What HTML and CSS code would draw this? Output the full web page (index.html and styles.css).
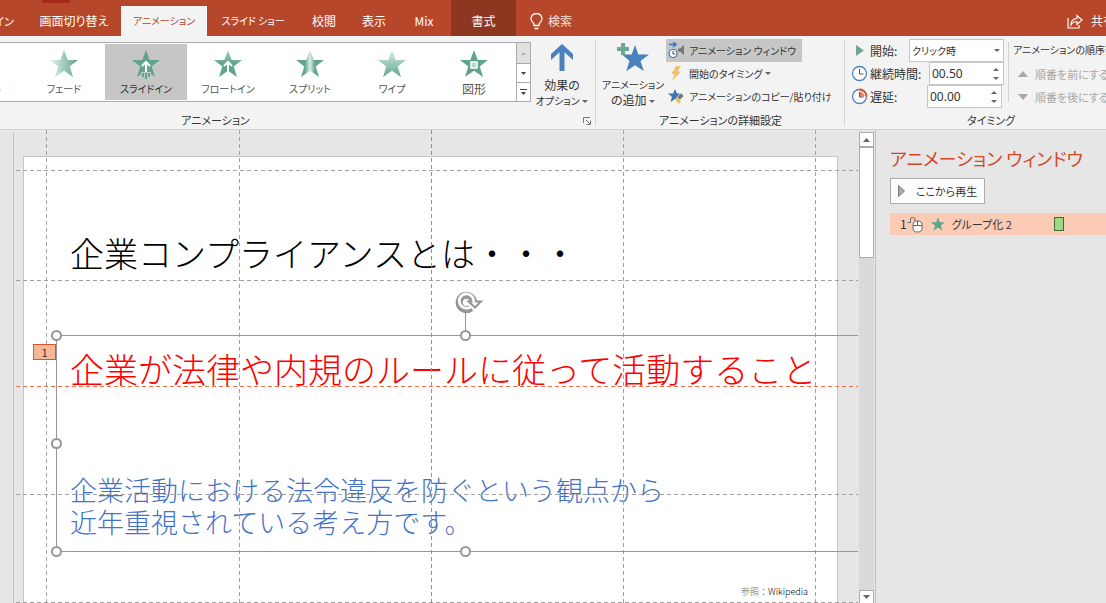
FILE: index.html
```html
<!DOCTYPE html>
<html lang="ja">
<head>
<meta charset="utf-8">
<title>アニメーション</title>
<link rel="stylesheet" href="styles.css">
</head>
<body>
<svg class="defs" aria-hidden="true">
  <defs>
    <linearGradient id="fade"><stop offset="0" stop-color="#e4f0eb"/><stop offset="1" stop-color="#5fa48c"/></linearGradient>
    <linearGradient id="float" x2="0" y2="1"><stop offset="0" stop-color="#b5d6ca"/><stop offset=".5" stop-color="#5fa48c"/></linearGradient>
    <linearGradient id="split"><stop offset=".32" stop-color="#5fa48c"/><stop offset=".5" stop-color="#dcece6"/><stop offset=".68" stop-color="#5fa48c"/></linearGradient>
    <linearGradient id="wipe" x2="0" y2="1"><stop offset="0" stop-color="#dcece6"/><stop offset="1" stop-color="#5fa48c"/></linearGradient>
    <path id="star" d="M14 0l3.700 10H28l-8.300 6.500L23 27l-9-6.300L5 27l3.300-10.500L0 10h10.300z"/>
  </defs>
</svg>

<nav class="tabs">
  <button class="tab tab-first">デザイン</button>
  <button class="tab tab-transition">画面切り替え</button>
  <button class="tab tab-active">アニメーション</button>
  <button class="tab tab-show">スライド ショー</button>
  <button class="tab tab-short">校閲</button>
  <button class="tab tab-short">表示</button>
  <button class="tab tab-short">Mix</button>
  <button class="tab tab-context">書式</button>
  <button class="tab tab-search">
    <svg width="13" height="17" viewBox="0 0 13 17" fill="none" stroke="#fff" stroke-width="1.300"><path d="M4 12.500V11C2 9 1 7.800 1 5.700a5.500 5.200 0 0 1 11 0C12 7.800 11 9 9 11v1.500zM4.500 15.500h4"/></svg>
    検索
  </button>
  <button class="tab tab-share">
    <svg width="16" height="15" viewBox="0 0 16 15" fill="none" stroke="#fff" stroke-width="1.200"><path d="M1 4v10h11v-3M4 11c0-4 2-6.500 6-6.500V1.500l5 4.500-5 4.500V7.500C7 7.500 5.500 8.500 4 11z"/></svg>
    共有
  </button>
</nav>

<header class="ribbon">
  <section class="group group-gallery">
    <div class="group-body">
      <div class="gallery">
        <button class="effect"><svg width="28" height="27"><use href="#star" fill="#5fa48c"/></svg>アピール</button>
        <button class="effect"><svg width="28" height="27"><use href="#star" fill="url(#fade)"/></svg>フェード</button>
        <button class="effect effect-on"><svg width="28" height="29"><use href="#star" fill="#5fa48c"/><path d="M9 22h10v5H9z" fill="#c6c6c6"/><path d="M10 23h2v4h-2zM13 23h2v6h-2zM16 23h2v4h-2z" fill="#5fa48c"/><path d="M14 22v-9M10 16l4-4 4 4" fill="none" stroke="#fff" stroke-width="2"/></svg>スライドイン</button>
        <button class="effect"><svg width="28" height="27"><use href="#star" fill="url(#float)"/><path d="M14 22v-9M10 16l4-4 4 4" fill="none" stroke="#fff" stroke-width="2"/></svg>フロートイン</button>
        <button class="effect"><svg width="28" height="27"><use href="#star" fill="url(#split)"/></svg>スプリット</button>
        <button class="effect"><svg width="28" height="27"><use href="#star" fill="url(#wipe)"/></svg>ワイプ</button>
        <button class="effect"><svg width="28" height="27"><use href="#star" fill="#5fa48c"/><path d="M11 12h6v6h-6z" fill="#b5d6ca" stroke="#fff" stroke-width="1.500"/></svg>図形</button>
      </div>
      <div class="gallery-nav">
        <button class="nav-off" aria-label="上へ"><svg width="5" height="3"><path d="M0 3l2.500-3L5 3z" fill="#b0b0b0"/></svg></button>
        <button aria-label="下へ"><svg width="5" height="3"><path d="M0 0h5L2.500 3z" fill="#444"/></svg></button>
        <button aria-label="その他"><svg width="7" height="7"><path d="M0 0h7v1H0zM1 3h5L3.500 6z" fill="#444"/></svg></button>
      </div>
      <button class="big big-options">
        <svg width="22" height="27" viewBox="0 0 22 27"><path d="M11 0l11 10v6L13.500 8.300V27h-5V8.300L0 16v-6z" fill="#4a81bd"/></svg>
        <span>効果の</span>
        <span><span class="kana">オプション</span> <i class="caret"></i></span>
      </button>
    </div>
    <div class="group-label">アニメーション</div>
    <button class="launcher" aria-label="詳細"><svg width="8" height="8" fill="none" stroke="#777"><path d="M.5 6V.5H7M3 3l4 4M7.500 3.500v4h-4"/></svg></button>
  </section>

  <section class="group group-advanced">
    <div class="group-body">
      <button class="big big-add">
        <svg width="32" height="29" viewBox="0 0 32 29"><path d="M18 2l3.400 9.500H32l-8.500 6.500 3.300 10L18 22.300 9.200 28.300l3.300-10.300L5 11.500h9.600z" fill="#4a81bd"/><path d="M4 0h4v4h4v4H8v4H4V8H0V4h4z" fill="#6fa592"/></svg>
        <span class="kana">アニメーション</span>
        <span>の追加 <i class="caret"></i></span>
      </button>
      <div class="commands">
        <button class="command command-on"><svg width="17" height="17" viewBox="0 0 17 17"><path d="M1 2.500h6M5 0l3 2.500L5 5" fill="none" stroke="#3b76b5" stroke-width="1.600"/><circle cx="5" cy="11.500" r="4" fill="#fff" stroke="#3b76b5" stroke-width="1.200"/><path d="M5 9v3h2" fill="none" stroke="#444"/><path d="M10 6.500h2L16 3v10l-4-3.500h-2z" fill="#777"/></svg>アニメーション ウィンドウ</button>
        <button class="command"><svg width="17" height="17" viewBox="0 0 17 17"><path d="M8 1h5L9.500 6.500H13L4 16l2.500-7H3.500z" fill="#f0bf62"/></svg>開始のタイミング <i class="caret"></i></button>
        <button class="command"><svg width="17" height="17" viewBox="0 0 17 17"><path d="M7 1l2 4.500h5L10 9l1.500 5L7 11l-4.500 3L4 9 0 5.500h5z" fill="#3b76b5"/><path d="M9 9l4-4 3 3-4 4z" fill="#777" stroke="#eee" stroke-width=".7"/><path d="M7 11l2-2 4 4-2 3z" fill="#f0bf62"/></svg>アニメーションのコピー/貼り付け</button>
      </div>
    </div>
    <div class="group-label">アニメーションの詳細設定</div>
  </section>

  <section class="group group-timing">
    <div class="group-body">
      <div class="fields">
        <div class="field field-start">
          <svg width="17" height="17"><path d="M5 3v11l8-5.500z" fill="#6fa592"/></svg>
          <label for="start">開始:</label>
          <select id="start" class="box box-start"><option>クリック時</option></select>
        </div>
        <div class="field">
          <svg width="17" height="17" fill="none"><circle cx="8.500" cy="8.500" r="7" fill="#fff" stroke="#4a81bd" stroke-width="1.300"/><path d="M8.500 4v5h4" stroke="#555"/></svg>
          <label for="duration">継続時間:</label>
          <span class="box box-spin"><input id="duration" value="00.50"><span class="spin"><i class="caret caret-up"></i><i class="caret"></i></span></span>
        </div>
        <div class="field">
          <svg width="17" height="17" fill="none"><circle cx="8.500" cy="8.500" r="7" fill="#fff" stroke="#4a81bd" stroke-width="1.300"/><path d="M8.500 1.500a7 7 0 0 1 7 7" stroke="#d35230" stroke-width="1.800"/><path d="M8.500 3.500a5 5 0 0 1 5 5h-5z" fill="#e8836a"/><path d="M8.500 4v5h4" stroke="#555"/></svg>
          <label for="delay">遅延:</label>
          <span class="box box-spin box-delay"><input id="delay" value="00.00"><span class="spin"><i class="caret caret-up"></i><i class="caret"></i></span></span>
        </div>
      </div>
      <div class="order">
        <span class="order-title">アニメーションの順序変更</span>
        <button class="order-button" disabled><svg width="10" height="6"><path d="M0 6l5-6 5 6z" fill="#a8a8a8"/></svg>順番を前にする</button>
        <button class="order-button" disabled><svg width="10" height="6"><path d="M0 0h10L5 6z" fill="#a8a8a8"/></svg>順番を後にする</button>
      </div>
    </div>
    <div class="group-label">タイミング</div>
  </section>
</header>

<div class="workspace">
  <div class="thumbs"></div>
  <main class="canvas">
    <article class="slide">
      <h1 class="slide-title">企業コンプライアンスとは・・・</h1>
      <p class="slide-lead">企業が法律や内規のルールに従って活動すること</p>
      <p class="slide-text">企業活動における法令違反を防ぐという観点から<br>近年重視されている考え方です。</p>
      <p class="slide-source"><span>参照：</span>Wikipedia</p>
    </article>
    <svg class="overlay" width="844" height="473" fill="none">
      <g stroke="#a0a0a0" stroke-dasharray="4 3">
        <path d="M32.500 0v473M225.500 0v473M609.500 0v473M801.500 0v473"/>
        <path d="M2 40.500h842M2 150.500h842M2 364.500h842M2 472.500h842"/>
      </g>
      <path d="M417.500 0v473M2 256.500h842" stroke="#f0704a" stroke-dasharray="4 3"/>
      <path d="M844 205.500H42.500v216H844M451.500 205v-24" stroke="#969696"/>
      <g stroke="#969696" stroke-width="2" fill="#fff">
        <circle cx="42.500" cy="205.500" r="4.500"/><circle cx="451.500" cy="205.500" r="4.500"/>
        <circle cx="42.500" cy="313.500" r="4.500"/>
        <circle cx="42.500" cy="421.500" r="4.500"/><circle cx="451.500" cy="421.500" r="4.500"/>
      </g>
      <path d="M457 178A7.200 7.200 0 1 1 459.500 171.500" stroke="#969696" stroke-width="7"/>
      <path d="M454.500 171.500H467l-6 6z" fill="#fff" stroke="#969696" stroke-width="2"/>
      <path d="M456.500 177A7.200 7.200 0 1 1 459.500 172.500" stroke="#fff" stroke-width="2.600"/>
    </svg>
    <span class="tag">1</span>
  </main>
  <div class="scrollbar">
    <button aria-label="上へスクロール"><svg width="7" height="4"><path d="M0 4l3.500-4L7 4z" fill="#666"/></svg></button>
    <div class="thumb"></div>
    <button class="scroll-down" aria-label="下へスクロール"><svg width="7" height="4"><path d="M0 0h7L3.500 4z" fill="#666"/></svg></button>
  </div>
  <aside class="pane">
    <h2 class="pane-title">アニメーション ウィンドウ</h2>
    <button class="play"><svg width="7" height="12"><path d="M.5.500v11l6-5.500z" fill="#aaa" stroke="#777"/></svg>ここから再生</button>
    <div class="entry">
      <span>1</span>
      <svg width="16" height="17" fill="none" stroke="#666"><path d="M.5 6.500h3V3q0-1.500 2-1.500T8 3v2"/><path d="M6 8.500q0-3.500 4.500-3.500t4.500 3.500v4q0 3.500-4.500 3.500t-4.500-3.500z" fill="#fff"/><path d="M6 9.500h9M10.500 5v4.500"/></svg>
      <svg class="entry-star" width="14" height="14" viewBox="0 0 28 27"><use href="#star" fill="#5fa48c"/></svg>
      <span class="entry-name">グループ化 2</span>
      <span class="bar"></span>
    </div>
  </aside>
</div>
</body>
</html>
```
FILE: styles.css
```css
* { box-sizing: border-box; }
body {
  margin: 0;
  height: 100vh;
  display: flex;
  flex-direction: column;
  overflow: hidden;
  background: #e6e6e6;
  color: #333;
  font: 12px/16px "Noto Sans CJK JP", sans-serif;
  font-feature-settings: "palt";
}
button, input, select { font: inherit; font-feature-settings: inherit; color: inherit; }
button { border: 0; padding: 0; background: none; white-space: nowrap; }
h1, h2, p { margin: 0; font-weight: 400; }
svg { flex: none; display: block; }
.defs { position: absolute; width: 0; height: 0; }
.kana { font-size: 10px; }

.tabs {
  flex: none;
  display: flex;
  height: 36px;
  padding-top: 6px;
  background: linear-gradient(#a52a1a, #a52a1a) 42px 0 / 28px 3px no-repeat #b7472a;
  color: #fff;
}
.tab { flex: none; }
.tab-first { width: 27px; padding-right: 13px; display: flex; justify-content: flex-end; align-items: center; font-size: 11px; }
.tab-transition { width: 94px; }
.tab-active { width: 86px; background: #f3f3f3; color: #b7472a; font-size: 10px; }
.tab-show { width: 92px; font-size: 10px; }
.tab-short { width: 50px; }
.tab-context { width: 65px; margin: -6px 0 0 2px; padding-top: 6px; background: #8e3720; }
.tab-search { display: flex; align-items: center; gap: 5px; margin-left: 14px; color: #f5e0da; }
.tab-share { display: flex; align-items: center; gap: 8px; margin: 0 -9px 0 auto; }

.ribbon {
  flex: none;
  display: flex;
  height: 94px;
  background: #f3f3f3;
  border-bottom: 1px solid #d2d2d2;
}
.group { position: relative; flex: none; display: flex; flex-direction: column; }
.group::after {
  content: "";
  position: absolute;
  top: 4px;
  right: 0;
  bottom: 4px;
  border-right: 1px solid #d2d2d2;
}
.group-body { display: flex; height: 76px; padding-top: 3px; }
.group-label { font-size: 11px; text-align: center; }
.group-gallery { width: 761px; margin-left: -165px; }
.group-gallery .group-body { justify-content: flex-end; padding-right: 6px; }
.group-advanced { width: 249px; }
.group-timing { width: 292px; }
.launcher { position: absolute; right: 5px; bottom: 4px; }

.gallery {
  display: flex;
  height: 60px;
  margin-top: 3px;
  padding: 1px;
  background: #fff;
  border: 1px solid #ababab;
}
.effect {
  width: 82px;
  padding: 6px 0 3px;
  display: flex;
  flex-direction: column;
  align-items: center;
  justify-content: space-between;
  color: #555;
  font-size: 10px;
}
.effect:last-child { font-size: 12px; }
.effect-on { background: #c6c6c6; color: #333; }
.gallery-nav {
  display: grid;
  grid-template-rows: 21px 19px 20px;
  width: 14px;
  height: 60px;
  margin: 3px 3px 0 0;
}
.gallery-nav button {
  display: grid;
  place-items: center;
  background: #fff;
  border: solid #ababab;
  border-width: 1px 1px 0 0;
}
.gallery-nav button:last-child { border-bottom-width: 1px; }
.gallery-nav .nav-off { background: #e1e1e1; }

.big { display: flex; flex-direction: column; align-items: center; line-height: 15px; }
.big svg { margin-bottom: 6px; }
.big-options { width: 56px; padding-top: 5px; }
.big-add { width: 68px; padding-top: 4px; margin-left: 3px; }
.big-add svg { margin-bottom: 5px; }
.caret {
  display: inline-block;
  border: solid transparent;
  border-width: 3px 3px 0;
  border-top-color: #666;
  vertical-align: middle;
}
.caret-up { border-width: 0 3px 3px; border-bottom-color: #666; }

.commands { display: flex; flex-direction: column; align-items: flex-start; margin-left: -1px; }
.command { display: flex; align-items: center; gap: 4px; height: 23px; padding: 0 6px 0 2px; font-size: 10px; }
.command .caret { margin-left: -1px; }
.command-on { background: #c6c6c6; }

.fields { flex: none; display: flex; flex-direction: column; width: 153px; margin-left: 6px; }
.field { display: flex; align-items: center; gap: 2px; height: 23px; }
.field label { font-size: 12px; white-space: nowrap; }
.box {
  height: 23px;
  margin-left: auto;
  padding: 0 2px;
  background: #fff;
  border: 1px solid #c6c6c6;
  border-radius: 0;
}
.box-start { width: 95px; appearance: none; font-size: 10px; }
.field-start { position: relative; }
.field-start::after {
  content: "";
  position: absolute;
  right: 4px;
  border: solid transparent;
  border-width: 3px 3px 0;
  border-top-color: #666;
  pointer-events: none;
}
.box-spin { display: flex; width: 75px; }
.box-delay { margin-right: 2px; }
.box input { width: 50px; border: 0; padding: 0; background: none; font: 12px/20px "Noto Sans", sans-serif; }
.spin { display: flex; flex-direction: column; justify-content: center; gap: 6px; margin-left: auto; padding-right: 2px; }

.order {
  flex: none;
  display: flex;
  flex-direction: column;
  height: 60px;
  margin: 3px 0 0 4px;
  padding-left: 4px;
  border-left: 1px solid #d2d2d2;
  font-size: 11px;
  white-space: nowrap;
}
.order-title { flex: none; height: 20px; font-size: 10px; }
.order-button { flex: none; display: flex; align-items: center; gap: 7px; height: 23px; padding-left: 5px; color: #a8a8a8; }

.workspace { flex: 1; min-height: 0; display: flex; }
.thumbs { flex: none; width: 14px; margin-top: 2px; border-right: 1px solid #c0c0c0; }
.canvas { position: relative; flex: 1; min-width: 0; overflow: hidden; padding: 26px 21px 0 9px; }
.slide {
  height: 100%;
  padding: 70px 0 0 46px;
  background: #fff;
  border: 1px solid #c6c6c6;
  border-bottom: 0;
  color: #000;
  font-family: "Noto Sans CJK JP Light", "Noto Sans CJK JP DemiLight", "Noto Sans CJK JP", sans-serif;
  font-weight: 300;
  font-feature-settings: normal;
  white-space: nowrap;
}
.slide-title, .slide-lead { font-size: 34px; font-weight: 300; line-height: 52px; }
.slide-lead { margin-top: 64px; color: #f00; }
.slide-text { margin-top: 79px; font-size: 27px; line-height: 32px; color: #4472c4; }
.slide-source { margin: 47px 29px 0 0; font-size: 9px; line-height: 14px; text-align: right; }
.slide-source span { color: #666; }
.overlay { position: absolute; left: 0; top: 0; }
.tag {
  position: absolute;
  left: 19px;
  top: 214px;
  width: 23px;
  height: 16px;
  border: 1px solid #d9532c;
  background: #f6b799;
  font-size: 11px;
  line-height: 14px;
  text-align: center;
}

.scrollbar {
  flex: none;
  display: flex;
  flex-direction: column;
  width: 17px;
  padding: 2px 1px 0 0;
  background: linear-gradient(#dadada, #dadada) 0 2px / 15px 100% no-repeat;
  border-right: 1px solid #c0c0c0;
}
.scrollbar button { display: grid; place-items: center; height: 15px; background: #fff; border: 1px solid #ababab; }
.scrollbar .scroll-down { margin-top: auto; height: 13px; border-bottom: 0; }
.thumb { height: 111px; background: #fff; border: 1px solid #ababab; }

.pane { flex: none; width: 230px; padding: 14px 0 0 14px; overflow: hidden; }
.pane-title { font-size: 18px; line-height: 28px; color: #d24726; white-space: nowrap; }
.play {
  display: flex;
  align-items: center;
  gap: 11px;
  height: 26px;
  margin: 6px 0 9px;
  padding: 0 7px;
  background: #fdfdfd;
  border: 1px solid #ababab;
  font-size: 11px;
}
.entry { display: flex; align-items: center; height: 22px; padding-left: 10px; background: #fbcbb5; }
.entry-star { margin: 0 7px 0 8px; }
.entry-name { width: 102px; font-size: 11px; }
.bar { width: 10px; height: 14px; border: 1px solid #3f6b2c; background: #9bd984; }
```
